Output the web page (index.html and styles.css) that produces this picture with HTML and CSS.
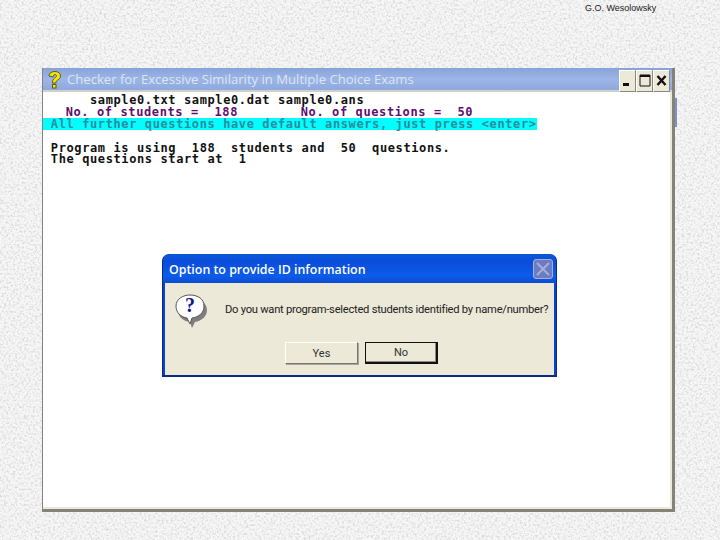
FILE: index.html
```html
<!DOCTYPE html>
<html lang="en">
<head>
<meta charset="utf-8">
<title>Checker for Excessive Similarity</title>
<link rel="stylesheet" href="styles.css">
</head>
<body>
<div class="slide">
  <svg class="marble" width="720" height="540" aria-hidden="true">
    <filter id="grain" x="0" y="0" width="100%" height="100%">
      <feTurbulence type="fractalNoise" baseFrequency="0.45" numOctaves="4" seed="7"/>
      <feColorMatrix type="matrix" values="0 0 0 0 0.7  0 0 0 0 0.7  0 0 0 0 0.7  3 0 0 0 -1.350"/>
    </filter>
    <rect width="720" height="540" fill="#f6f6f6"/>
    <rect width="720" height="540" filter="url(#grain)"/>
  </svg>
  <div class="author">G.O. Wesolowsky</div>
  <div class="back-sliver"></div>
  <section class="console">
    <header class="console-title">
      <svg class="help-icon" width="16" height="18" viewBox="0 0 16 18" aria-hidden="true">
        <path d="M3 5C3 2 6 .5 9 .5c3.500 0 5.500 2 5.500 4.500 0 2.500-2 3.500-3.500 4.500-.8.600-1 1-1 2.500H6.500c0-2.500.3-3.500 2-4.800 1.300-1 2-1.500 2-2.200S10 3.500 9 3.500 7 4.500 7 6Z" fill="#f6e500" stroke="#5f5b20" stroke-width="1"/>
        <rect x="6.500" y="13.500" width="3.500" height="3.500" fill="#f6e500" stroke="#5f5b20"/>
      </svg>
      <span class="console-name">Checker for Excessive Similarity in Multiple Choice Exams</span>
      <div class="caption-buttons">
        <span class="cap-btn"><svg width="15" height="19" viewBox="0 0 15 19"><rect x="3" y="12" width="6" height="3" fill="#111"/></svg></span>
        <span class="cap-btn"><svg width="15" height="19" viewBox="0 0 15 19"><path d="M3 4h10v11H3z" fill="none" stroke="#111"/><path d="M3 5h10" stroke="#111" stroke-width="2"/></svg></span>
        <span class="cap-btn"><svg width="15" height="19" viewBox="0 0 15 19"><path d="M3.500 5l8 9M11.500 5l-8 9" stroke="#111" stroke-width="2.400"/></svg></span>
      </div>
    </header>
    <div class="console-body">
<pre class="line ink-black">      sample0.txt sample0.dat sample0.ans</pre>
<pre class="line ink-purple">  No. of students =  188        No. of questions =  50</pre>
<pre class="line ink-teal"><span class="hilite"> All further questions have default answers, just press &lt;enter&gt;</span></pre>
<pre class="line"> </pre>
<pre class="line ink-black"> Program is using  188  students and  50  questions.</pre>
<pre class="line ink-black"> The questions start at  1</pre>
    </div>
  </section>
  <section class="dialog">
    <header class="dialog-title">
      <span class="dialog-name">Option to provide ID information</span>
      <span class="dialog-close"><svg width="20" height="20" viewBox="0 0 20 20"><path d="M4 4l12 12M16 4L4 16" stroke="#a9aed6" stroke-width="2"/></svg></span>
    </header>
    <div class="dialog-body">
      <div class="dialog-message">
        <svg class="bubble" width="34" height="36" viewBox="0 0 34 36" aria-hidden="true">
          <path d="M17 4c8 0 15 5 15 12s-6 11-12 12l-3 6-2-6C8 27 3 23 3 16S9 4 17 4Z" fill="#7f7f7f"/>
          <path d="M15 1C8 1 1 5 1 12s5 11 11 12l3 6 2-6c7-1 12-5 12-12S23 1 15 1Z" fill="#fff" stroke="#555" stroke-width="1"/>
          <text class="bubble-mark" x="15" y="18" text-anchor="middle">?</text>
        </svg>
        <span class="dialog-text">Do you want program-selected students identified by name/number?</span>
      </div>
      <div class="dialog-actions">
        <button class="btn" type="button">Yes</button>
        <button class="btn btn-default" type="button">No</button>
      </div>
    </div>
  </section>
</div>
</body>
</html>
```

FILE: styles.css
```css
html, body { margin: 0; padding: 0; background: #f0f0f0; }
.slide { position: relative; width: 720px; height: 540px; overflow: hidden; font-family: "Liberation Sans", sans-serif; }
.marble { position: absolute; left: 0; top: 0; }
.author { position: absolute; left: 585px; top: 3px; font-size: 9px; line-height: 11px; color: #222; }
.back-sliver { position: absolute; left: 675px; top: 98px; width: 2px; height: 29px; background: #7f90c4; }

.console { position: absolute; left: 42px; top: 68px; width: 633px; height: 444px; box-sizing: border-box; display: flex; flex-direction: column; background: #fff; border-right: 3px solid #85827a; border-bottom: 3px solid #85827a; border-left: 1px solid #85827a; box-shadow: inset -2px -2px 0 #ece9d8; }
.console-title { flex: none; height: 24px; margin-right: 0; padding: 2px 3px 0 3px; box-sizing: border-box; display: flex; align-items: center; gap: 5px; background: linear-gradient(#88a3d9, #9db5e6 50%, #8fa9de); border-bottom: 2px solid #cfcfcb; }
.help-icon { flex: none; }
.console-name { flex: 1; margin-top: -2px; font-family: "Open Sans", sans-serif; font-size: 13.100px; color: #dbe5f7; white-space: nowrap; }
.caption-buttons { display: flex; gap: 1px; margin-top: 1px; }
.cap-btn { width: 15px; height: 20px; display: block; background: #ece9d8; border-top: 1px solid #fff; border-left: 1px solid #fff; box-shadow: 1px 1px 0 #8a877c; }
.cap-btn svg { display: block; }
.console-body { padding-top: 2px; }
.line { margin: 0; height: 11.900px; font-family: "DejaVu Sans Mono", monospace; font-weight: bold; font-size: 12px; line-height: 12px; letter-spacing: 0.610px; white-space: pre; }
.ink-black { color: #111; }
.ink-purple { color: #5e0f6e; padding-left: 7px; }
.ink-teal { color: #2c8b9c; }
.hilite { display: inline-block; height: 12px; background: #0ff; }

.dialog { position: absolute; left: 162px; top: 254px; width: 395px; height: 123px; box-sizing: border-box; display: flex; flex-direction: column; background: #0a43cc; border: 1px solid #0a2a86; border-top-color: #0a4fd0; border-bottom-width: 2px; border-radius: 7px 7px 0 0; }
.dialog-title { flex: none; height: 28px; padding: 0 3px 0 6px; display: flex; align-items: center; justify-content: space-between; background: linear-gradient(#0a58dc, #0a4cd8 20%, #0c5cea 75%, #0a4cd0); border-radius: 6px 6px 0 0; }
.dialog-name { font-family: "Open Sans", sans-serif; font-weight: 600; font-size: 12.400px; color: #fff; white-space: nowrap; }
.dialog-close { width: 20px; height: 20px; display: block; box-sizing: border-box; background: #6a7dc4; border: 1px solid #a9aed6; border-radius: 3px; overflow: hidden; }
.dialog-close svg { display: block; margin: -1px; }
.dialog-body { flex: 1; margin: 0 2px; padding: 11px 0 0 10px; background: #ece9d8; display: flex; flex-direction: column; }
.dialog-message { display: flex; align-items: flex-start; gap: 16px; height: 48px; }
.bubble { flex: none; }
.bubble-mark { font-family: "Liberation Serif", serif; font-weight: bold; font-size: 20px; fill: #12128c; }
.dialog-text { padding-top: 8px; font-family: Roboto, sans-serif; font-size: 11.200px; letter-spacing: -0.260px; line-height: 16px; color: #222; white-space: nowrap; }
.dialog-actions { display: flex; gap: 7px; margin-left: 110px; }
.btn { width: 73px; height: 22px; padding: 0; box-sizing: border-box; font-family: Roboto, sans-serif; font-size: 11px; color: #333; background: #ece9d8; border: 1px solid #fff; border-right-color: #77756c; border-bottom-color: #77756c; box-shadow: 1px 1px 0 #a9a79b; }
.btn-default { border: 2px solid #111; border-top-width: 1px; border-left-width: 1px; box-shadow: inset -1px -1px 0 #8d8b80; }
```
